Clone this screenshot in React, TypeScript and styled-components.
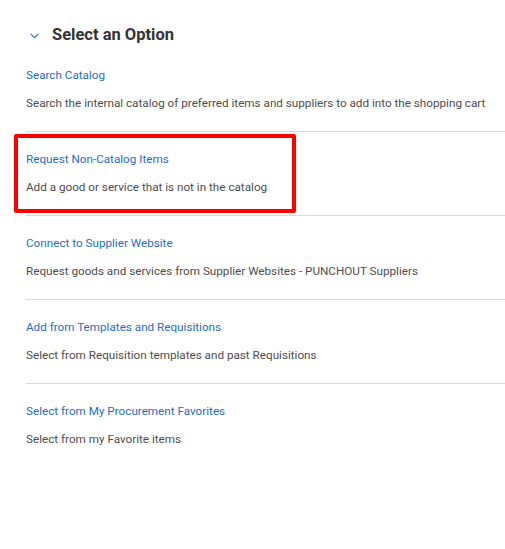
import React from "react";
import styled, { createGlobalStyle } from "styled-components";

const Global = createGlobalStyle`
  html, body { margin: 0; padding: 0; background: #fff; }
  body { font-family: Roboto, "Noto Sans", Arial, sans-serif; }
`;

const Page = styled.div`
  width: 505px;
  height: 549px;
  background: #fff;
  padding-left: 26px;
  box-sizing: border-box;
`;

const Header = styled.div`
  display: flex;
  align-items: center;
  height: 48px;
  gap: 13px;
  padding-left: 4px;
  padding-top: 21px;
  box-sizing: border-box;
`;

const Chevron = styled.svg`
  display: block;
  margin-top: 2px;
`;

const Title = styled.h2`
  margin: 0;
  font-size: 16.5px;
  font-weight: 700;
  color: #333;
  line-height: 20px;
`;

const Item = styled.div<{ $last?: boolean }>`
  position: relative;
  display: flex;
  flex-direction: column;
  gap: 12px;
  padding: 19px 0 20px;
  border-bottom: ${(p) => (p.$last ? "none" : "1px solid #d9d9d9")};
`;

const ItemLink = styled.a`
  font-size: 11.7px;
  line-height: 16px;
  color: #1f6dc4;
  text-decoration: none;
  cursor: pointer;
`;

const ItemDesc = styled.div`
  font-size: 11.7px;
  line-height: 16px;
  color: #4d4d4d;
`;

const Highlight = styled.div`
  position: absolute;
  left: -12px;
  top: 2px;
  width: 282px;
  height: 79px;
  border: 4px solid #ff0000;
  border-radius: 2px;
  box-sizing: border-box;
  pointer-events: none;
`;

const items = [
  {
    title: "Search Catalog",
    desc: "Search the internal catalog of preferred items and suppliers to add into the shopping cart",
  },
  {
    title: "Request Non-Catalog Items",
    desc: "Add a good or service that is not in the catalog",
    highlight: true,
  },
  {
    title: "Connect to Supplier Website",
    desc: "Request goods and services from Supplier Websites - PUNCHOUT Suppliers",
  },
  {
    title: "Add from Templates and Requisitions",
    desc: "Select from Requisition templates and past Requisitions",
  },
  {
    title: "Select from My Procurement Favorites",
    desc: "Select from my Favorite items",
  },
];

export default function App() {
  return (
    <>
      <Global />
      <Page>
        <Header>
          <Chevron width="9" height="6" viewBox="0 0 9 6" fill="none">
            <path d="M0.7 0.9 L4.5 4.7 L8.3 0.9" stroke="#1f6dc4" strokeWidth="1.1" />
          </Chevron>
          <Title>Select an Option</Title>
        </Header>
        {items.map((it, i) => (
          <Item key={it.title} $last={i === items.length - 1}>
            <ItemLink>{it.title}</ItemLink>
            <ItemDesc>{it.desc}</ItemDesc>
            {it.highlight && <Highlight />}
          </Item>
        ))}
      </Page>
    </>
  );
}
